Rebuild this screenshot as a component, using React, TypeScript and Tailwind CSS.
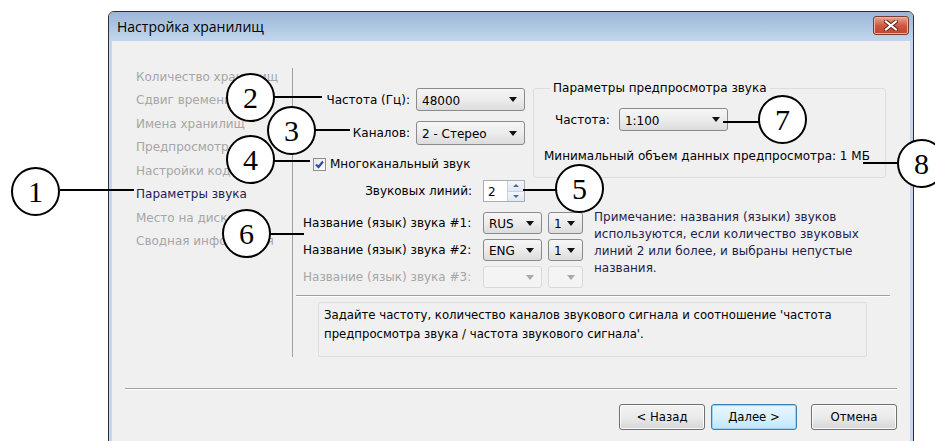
import React from 'react';

const navItems = [
  'Количество хранилищ',
  'Сдвиг времени',
  'Имена хранилищ',
  'Предпросмотр',
  'Настройки кодека',
  'Параметры звука',
  'Место на диске',
  'Сводная информация',
];

// Windows 7 style combobox
function Combo({ value, className, disabled }: { value?: string; className: string; disabled?: boolean }) {
  return (
    <div
      className={`flex items-center justify-between rounded-[3px] border pl-[5px] pr-[7px] ${
        disabled
          ? 'border-[#d9d9d9] bg-[#f4f4f4]'
          : 'border-[#8a8a8a] bg-linear-to-b from-[#f6f6f6] via-[#ececec] to-[#dcdcdc] text-black'
      } ${className}`}
    >
      <span className="pt-[2px]">{value}</span>
      <svg width="8" height="5" viewBox="0 0 8 5">
        <path d="M0 0h8L4 5z" fill={disabled ? '#a9a9a9' : '#111'} />
      </svg>
    </div>
  );
}

function Checkbox() {
  return (
    <div className="flex h-[13px] w-[13px] items-center justify-center border border-[#8f8f8f] bg-linear-to-br from-[#e6e6e6] to-[#ffffff]">
      <svg width="9" height="9" viewBox="0 0 9 9">
        <path d="M1 4.5L3.5 7L8 1.5" stroke="#2c4f99" strokeWidth="2.2" fill="none" />
      </svg>
    </div>
  );
}

function Spinner({ value }: { value: string }) {
  return (
    <div className="flex h-[22px] w-[42px] border border-[#abadb3] bg-white">
      <div className="flex flex-1 items-center pl-[4px] pt-[1px]">{value}</div>
      <div className="flex w-[17px] flex-col border-l border-[#c9d2dc]">
        <div className="flex flex-1 items-center justify-center border-b border-[#c9d2dc] bg-linear-to-b from-[#f3f6fa] to-[#e1e8f0]">
          <svg width="6" height="3" viewBox="0 0 6 3"><path d="M0 3h6L3 0z" fill="#4e6a93" /></svg>
        </div>
        <div className="flex flex-1 items-center justify-center bg-linear-to-b from-[#f3f6fa] to-[#e1e8f0]">
          <svg width="6" height="3" viewBox="0 0 6 3"><path d="M0 0h6L3 3z" fill="#4e6a93" /></svg>
        </div>
      </div>
    </div>
  );
}

function WinButton({ label, primary }: { label: string; primary?: boolean }) {
  return (
    <div
      className={`flex h-[26px] w-[86px] items-center justify-center rounded-[3px] border font-['DejaVu_Sans_Condensed','DejaVu_Sans',sans-serif] font-stretch-condensed text-[13px] text-black ${
        primary
          ? 'border-[#3c7fb1] bg-linear-to-b from-[#eaf6fd] via-[#d9f0fc] to-[#bee6fd] shadow-[inset_0_0_0_1px_#9ad3f5]'
          : 'border-[#707070] bg-linear-to-b from-[#f2f2f2] via-[#ebebeb] to-[#d6d6d6] shadow-[inset_0_0_0_1px_#fcfcfc]'
      }`}
    >
      {label}
    </div>
  );
}

function Callout({ n, className }: { n: string; className: string }) {
  return (
    <div
      className={`absolute flex h-[49px] w-[49px] items-center justify-center rounded-full border-2 border-black bg-white font-['Liberation_Serif',serif] text-[30px] leading-none text-black ${className}`}
    >
      {n}
    </div>
  );
}

function Leader({ className }: { className: string }) {
  return <div className={`absolute h-[2px] bg-black ${className}`} />;
}

export default function App() {
  return (
    <div className="relative h-[441px] w-[935px] overflow-hidden bg-white font-['DejaVu_Sans',sans-serif] text-[12px] text-black">
      {/* dialog window */}
      <div className="ml-[108px] mt-[11px] flex h-[440px] w-[806px] flex-col overflow-hidden rounded-t-[6px] border border-[#2e2e2e] bg-[#c3d8ee]">
        <div className="flex h-[29px] shrink-0 items-center justify-between bg-linear-to-b from-[#9bb6d6] to-[#c2d7ee] pl-[8px] pr-[4px]">
          <span className="font-['Open_Sans',sans-serif] text-[14px] text-black">Настройка хранилищ</span>
          <div className="mb-[2px] flex h-[19px] w-[36px] items-center justify-center rounded-[3px] border border-[#7a3a2c] bg-linear-to-b from-[#e8a493] via-[#cf5a41] to-[#c0432a] shadow-[inset_0_0_0_1px_#eeb3a4]">
            <svg width="14" height="11" viewBox="0 0 14 11">
              <path d="M2 1.5L12 9.5M12 1.5L2 9.5" stroke="#5a1d12" strokeWidth="4" strokeLinecap="square" />
              <path d="M2 1.5L12 9.5M12 1.5L2 9.5" stroke="#ffffff" strokeWidth="2.2" strokeLinecap="square" />
            </svg>
          </div>
        </div>

        <div className="mx-[3px] flex flex-1 flex-col bg-[#f0f0f0]">
          <div className="flex items-start">
            {/* wizard steps */}
            <div className="w-[180px] pl-[24px] pt-[24px]">
              {navItems.map((item) => (
                <div
                  key={item}
                  className={`flex h-[23.5px] items-center whitespace-nowrap ${
                    item === 'Параметры звука' ? 'text-[#1c1c5a]' : 'text-[#a6a6a6]'
                  }`}
                >
                  {item}
                </div>
              ))}
            </div>

            {/* page contents */}
            <div className="mt-[27px] flex h-[289px] w-[617px] flex-col border-l border-[#a0a0a0]">
              <div className="flex pt-[12px]">
                <div className="w-[240px] pt-[8px]">
                  <div className="flex h-[23px] items-center">
                    <span className="w-[117px] text-right">Частота (Гц):</span>
                    <Combo value="48000" className="ml-[6px] h-[23px] w-[109px]" />
                  </div>
                  <div className="mt-[10px] flex h-[24px] items-center">
                    <span className="w-[117px] text-right">Каналов:</span>
                    <Combo value="2 - Стерео" className="ml-[6px] h-[24px] w-[109px]" />
                  </div>
                  <div className="mt-[12px] flex h-[14px] items-center pl-[20px]">
                    <Checkbox />
                    <span className="ml-[4px]">Многоканальный звук</span>
                  </div>
                </div>

                <fieldset className="h-[98px] w-[353px] rounded-[3px] border border-[#d5dfe5] pl-[10px]">
                  <legend className="ml-[6px] px-[3px] leading-[16px]">Параметры предпросмотра звука</legend>
                  <div className="mt-[12px] flex h-[23px] items-center pl-[11px]">
                    <span>Частота:</span>
                    <Combo value="1:100" className="ml-[9px] h-[23px] w-[109px]" />
                  </div>
                  <div className="mt-[16px] whitespace-nowrap">Минимальный объем данных предпросмотра: 1 МБ</div>
                </fieldset>
              </div>

              <div className="mt-[2px] flex h-[22px] items-center">
                <span className="w-[179px] text-right">Звуковых линий:</span>
                <div className="ml-[11px]">
                  <Spinner value="2" />
                </div>
              </div>

              <div className="mt-[10px] flex">
                <div className="flex w-[290px] flex-col gap-[5px]">
                  {[
                    { label: 'Название (язык) звука #1:', lang: 'RUS', idx: '1' },
                    { label: 'Название (язык) звука #2:', lang: 'ENG', idx: '1' },
                    { label: 'Название (язык) звука #3:', lang: '', idx: '', off: true },
                  ].map((row) => (
                    <div key={row.label} className="flex h-[22px] items-center">
                      <span className={`w-[179px] whitespace-nowrap pl-[10px] ${row.off ? 'text-[#a6a6a6]' : ''}`}>
                        {row.label}
                      </span>
                      <Combo value={row.lang} disabled={row.off} className="ml-[11px] h-[22px] w-[59px]" />
                      <Combo value={row.idx} disabled={row.off} className="ml-[6px] h-[22px] w-[35px]" />
                    </div>
                  ))}
                </div>
                <p className="-mt-[3px] ml-[11px] w-[280px] leading-[17px] text-[#1e1f4c]">
                  Примечание: названия (языки) звуков используются, если количество звуковых линий 2 или более, и выбраны непустые названия.
                </p>
              </div>

              <div className="ml-[3px] mt-[7px] w-[594px] border-t border-b border-t-[#a0a0a0] border-b-white" />

              <div className="ml-[25px] mt-[5px] h-[55px] w-[549px] rounded-[2px] border border-[#d5dfe5] px-[5px] pt-[2px] font-['DejaVu_Sans_Condensed','DejaVu_Sans',sans-serif] font-stretch-condensed text-[13px] leading-[19px]">
                Задайте частоту, количество каналов звукового сигнала и соотношение 'частота предпросмотра звука / частота звукового сигнала'.
              </div>
            </div>
          </div>

          <div className="ml-[13px] mt-[31px] w-[772px] border-t border-b border-t-[#a0a0a0] border-b-white" />

          <div className="mt-[14px] flex justify-end gap-[6px] pr-[13px]">
            <WinButton label="< Назад" />
            <WinButton label="Далее >" primary />
            <div className="ml-[8px]">
              <WinButton label="Отмена" />
            </div>
          </div>
        </div>
      </div>

      {/* numbered callouts */}
      <Leader className="left-[60px] top-[189px] w-[74px]" />
      <Leader className="left-[274px] top-[96px] w-[48px]" />
      <Leader className="left-[315px] top-[129px] w-[35px]" />
      <Leader className="left-[274px] top-[160px] w-[36px]" />
      <Leader className="left-[523px] top-[189px] w-[33px]" />
      <Leader className="left-[270px] top-[233px] w-[34px]" />
      <Leader className="left-[723px] top-[121px] w-[36px]" />
      <Leader className="left-[863px] top-[162px] w-[35px]" />

      <Callout n="1" className="left-[11px] top-[167px]" />
      <Callout n="2" className="left-[226px] top-[73px]" />
      <Callout n="3" className="left-[267px] top-[106px]" />
      <Callout n="4" className="left-[226px] top-[135px]" />
      <Callout n="5" className="left-[555px] top-[164px]" />
      <Callout n="6" className="left-[222px] top-[209px]" />
      <Callout n="7" className="left-[758px] top-[95px]" />
      <Callout n="8" className="left-[897px] top-[139px]" />
    </div>
  );
}
